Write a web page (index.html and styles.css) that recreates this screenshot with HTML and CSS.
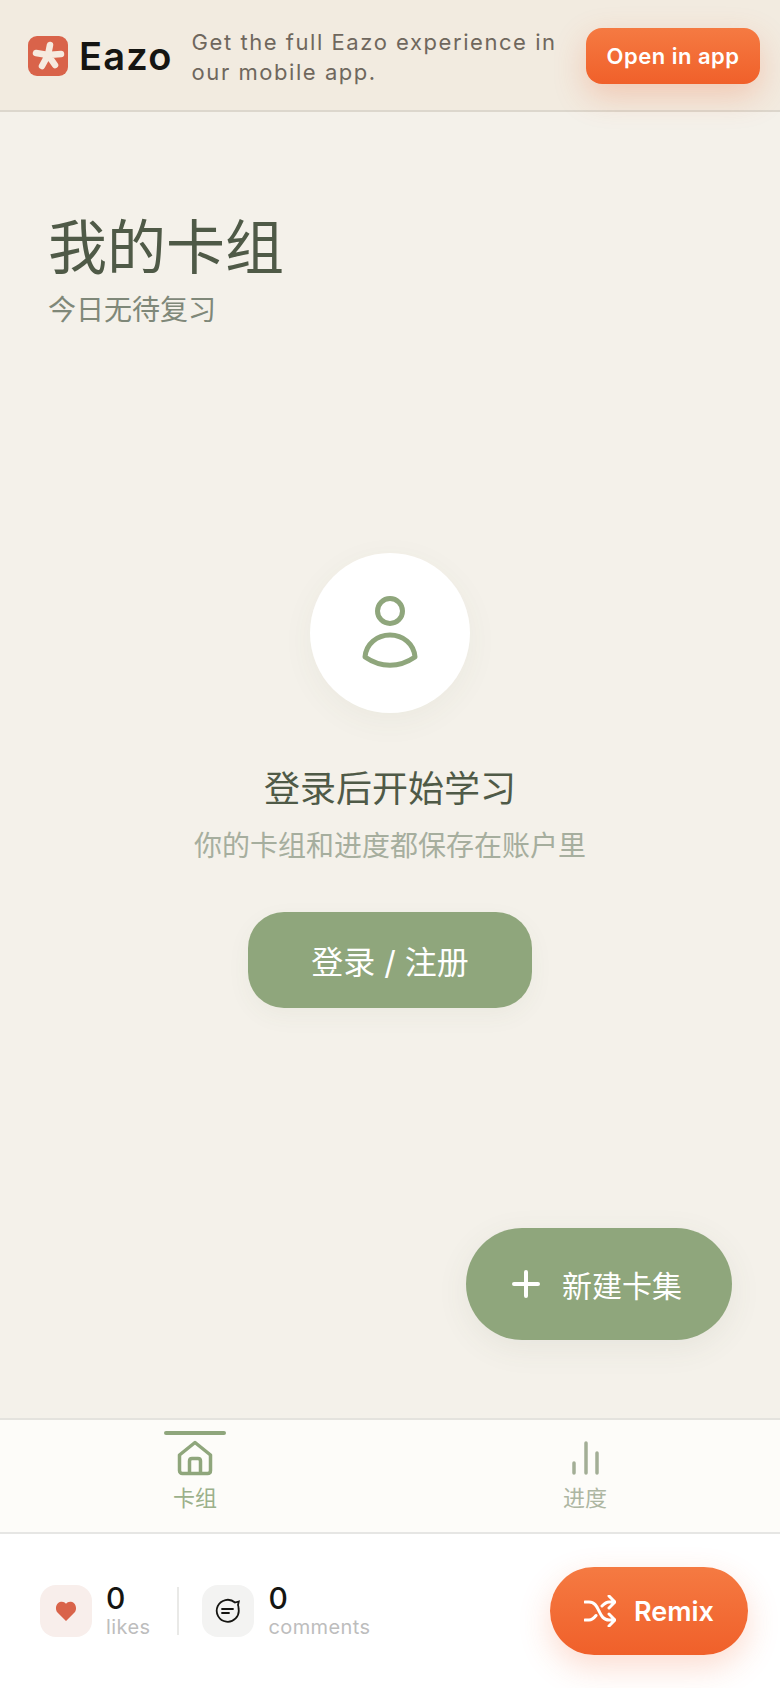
FILE: index.html
```html
<!DOCTYPE html>
<html lang="zh-CN">
<head>
  <meta charset="UTF-8">
  <title>我的卡组</title>
  <meta name="viewport" content="width=device-width, initial-scale=1.0">
  <link rel="stylesheet" href="styles.css">
</head>
<body>

  <div class="banner">
    <svg class="logo-mark" viewBox="0 0 40 40">
      <rect width="40" height="40" rx="9" fill="#d9634a"/>
      <path d="M20 19 22 9M20 19 33 18M20 19 27 29M20 19 14 30M20 19 8 17" stroke="#f6eadf" stroke-width="6.500" stroke-linecap="round"/>
    </svg>
    <span class="wordmark">Eazo</span>
    <p class="banner-text">Get the full Eazo experience in our mobile app.</p>
    <button class="open-btn">Open in app</button>
  </div>

  <div class="main">
    <h1>我的卡组</h1>
    <p class="subtitle">今日无待复习</p>

    <div class="login-box">
      <div class="avatar">
        <svg viewBox="0 0 56 80" width="56" height="80" fill="none" stroke="#8fa67c" stroke-width="5" stroke-linejoin="round">
          <circle cx="28" cy="18" r="12.500"/>
          <path d="M3 64c1-13 12-22 25-22s24 9 25 22c-16 11-34 11-50 0z"/>
        </svg>
      </div>
      <h2>登录后开始学习</h2>
      <p class="login-hint">你的卡组和进度都保存在账户里</p>
      <button class="login-btn">登录 / 注册</button>
    </div>

    <button class="new-btn">
      <svg viewBox="0 0 28 28" width="28" height="28" stroke="#fff" stroke-width="4" stroke-linecap="round">
        <path d="M14 2v24M2 14h24"/>
      </svg>
      新建卡集
    </button>
  </div>

  <div class="tabs">
    <div class="tab active">
      <svg viewBox="0 0 36 36" width="36" height="36" fill="none" stroke="#8fa67c" stroke-width="3.500" stroke-linejoin="round">
        <path d="M18 2.500 33.500 15v15.500c0 2-1.200 3-3 3h-25c-1.800 0-3-1-3-3V15z"/>
        <path d="M12.500 33.500V21c0-1.500 1-2.500 2.500-2.500h6c1.500 0 2.500 1 2.500 2.500v12.500"/>
      </svg>
      <span>卡组</span>
    </div>
    <div class="tab">
      <svg viewBox="0 0 36 36" width="36" height="36" fill="none" stroke="#a3ae96" stroke-width="3.500" stroke-linecap="round">
        <path d="M7 33V23M19 33V3M30 33V13"/>
      </svg>
      <span>进度</span>
    </div>
  </div>

  <div class="bottom">
    <div class="stat">
      <div class="stat-icon like">
        <svg viewBox="0 0 22 22" width="22" height="22"><path d="M11 21 2.500 12.500C-.5 9 1 2.500 6 1.800c2-.3 3.800.4 5 2 1.200-1.600 3-2.300 5-2 5 .7 6.500 7.200 3.500 10.700z" fill="#d9634a"/></svg>
      </div>
      <div class="stat-text">
        <b>0</b>
        <span>likes</span>
      </div>
    </div>
    <div class="stat-line"></div>
    <div class="stat">
      <div class="stat-icon comment">
        <svg viewBox="0 0 26 26" width="26" height="26" fill="none" stroke="#151512" stroke-width="1.800" stroke-linecap="round">
          <path d="M20 4.500A11 11 0 1 0 23.600 11c0-1.500-.2-3-.6-4l.800-3.500z"/>
          <path d="M7 11h11M7 15h7"/>
        </svg>
      </div>
      <div class="stat-text">
        <b>0</b>
        <span>comments</span>
      </div>
    </div>
    <button class="remix-btn">
      <svg viewBox="0 0 32 32" width="32" height="32" fill="none" stroke="#fff" stroke-width="3" stroke-linecap="round" stroke-linejoin="round">
        <path d="M1 7h4c6 0 8 5 10 9s4 9 10 9h6M1 25h4c3 0 5-2 7-4.500M18 11c2-2 4-4 7-4h6M25 1l6 6-6 6M25 19l6 6-6 6"/>
      </svg>
      Remix
    </button>
  </div>

</body>
</html>
```

FILE: styles.css
```css
* {
  box-sizing: border-box;
}

html, body {
  height: 100%;
}

body {
  margin: 0;
  display: flex;
  flex-direction: column;
  font-family: "Inter", "Noto Sans CJK SC", sans-serif;
  background: #f4f1ea;
  overflow: hidden;
}

button {
  border: none;
  font-family: inherit;
  color: #fff;
}

.banner {
  height: 112px;
  flex: none;
  display: flex;
  align-items: center;
  padding: 2px 20px 0 28px;
  background: #f2ebe0;
  border-bottom: 2px solid #dcd7cd;
}

.logo-mark {
  width: 40px;
  height: 40px;
  flex: none;
}

.wordmark {
  margin-left: 11px;
  font-size: 38px;
  font-weight: 600;
  letter-spacing: 1.2px;
  color: #151512;
}

.banner-text {
  width: 380px;
  margin: 2px 0 0 19px;
  font-size: 22px;
  line-height: 30px;
  letter-spacing: 1.55px;
  color: #6f675d;
}

.open-btn {
  margin-left: auto;
  width: 174px;
  height: 56px;
  border-radius: 16px;
  font-size: 22px;
  font-weight: 600;
  letter-spacing: 0.5px;
  background: linear-gradient(to bottom, #f57a42, #f0602a);
  box-shadow: 0 12px 32px rgba(240, 96, 42, 0.25);
}

.main {
  flex: 1;
  position: relative;
  padding: 100px 48px 0;
}

h1 {
  margin: 0;
  font-size: 59px;
  font-weight: 400;
  line-height: 72px;
  color: #4f5a47;
}

.subtitle {
  margin: 6px 0 0;
  font-size: 28px;
  line-height: 40px;
  font-weight: 400;
  color: #7f8879;
}

.login-box {
  display: flex;
  flex-direction: column;
  align-items: center;
  margin-top: 223px;
}

.avatar {
  width: 160px;
  height: 160px;
  display: flex;
  align-items: center;
  justify-content: center;
  border-radius: 50%;
  background: #fff;
  box-shadow: 0 8px 32px rgba(74, 90, 66, 0.05);
}

h2 {
  margin: 52px 0 0;
  font-size: 36px;
  line-height: 48px;
  font-weight: 400;
  color: #4f5a47;
}

.login-hint {
  margin: 13px 0 0;
  font-size: 28px;
  line-height: 40px;
  font-weight: 400;
  color: #a6ae9e;
}

.login-btn {
  width: 284px;
  height: 96px;
  margin-top: 46px;
  border-radius: 36px;
  font-size: 32px;
  font-weight: 400;
  background: #8fa67c;
  box-shadow: 0 8px 24px rgba(74, 90, 66, 0.05);
}

.new-btn {
  position: absolute;
  right: 48px;
  bottom: 78px;
  width: 266px;
  height: 112px;
  display: flex;
  align-items: center;
  gap: 22px;
  padding: 0 0 0 46px;
  border-radius: 56px;
  font-size: 30px;
  font-weight: 400;
  background: #8fa67c;
  box-shadow: 0 8px 32px rgba(74, 90, 66, 0.08);
}

.tabs {
  height: 116px;
  flex: none;
  display: flex;
  background: #fdfcf9;
  border-top: 2px solid #e4e3de;
  border-bottom: 2px solid #e6e6e4;
}

.tab {
  flex: 1;
  display: flex;
  flex-direction: column;
  align-items: center;
  position: relative;
  padding-top: 20px;
  font-size: 22px;
  line-height: 30px;
  color: #adb6a2;
}

.tab svg {
  margin-bottom: 7px;
}

.tab.active {
  color: #9bb08a;
}

.tab.active::before {
  content: "";
  position: absolute;
  top: 11px;
  left: 50%;
  width: 62px;
  height: 4px;
  margin-left: -31px;
  border-radius: 2px;
  background: #8fa67c;
}

.bottom {
  height: 154px;
  flex: none;
  display: flex;
  align-items: center;
  padding: 0 32px 0 40px;
  background: #fff;
}

.stat {
  display: flex;
  align-items: center;
  gap: 14px;
}

.stat-icon {
  width: 52px;
  height: 52px;
  display: flex;
  align-items: center;
  justify-content: center;
  border-radius: 16px;
}

.stat-icon.like {
  background: #f8eeeb;
}

.stat-icon.comment {
  background: #f3f3f2;
}

.stat-text {
  display: flex;
  flex-direction: column;
}

.stat-text b {
  font-size: 30px;
  line-height: 32px;
  font-weight: 500;
  color: #151512;
}

.stat-text span {
  font-size: 20px;
  line-height: 26px;
  letter-spacing: 0.4px;
  color: #bdbdbd;
}

.stat-line {
  width: 2px;
  height: 48px;
  margin: 0 23px 0 27px;
  background: #e9e9e7;
}

.remix-btn {
  margin-left: auto;
  width: 198px;
  height: 88px;
  display: flex;
  align-items: center;
  justify-content: center;
  gap: 18px;
  border-radius: 44px;
  font-size: 27px;
  font-weight: 600;
  background: linear-gradient(to bottom, #f57a42, #f0602a);
  box-shadow: 0 12px 32px rgba(240, 96, 42, 0.22);
}
```
